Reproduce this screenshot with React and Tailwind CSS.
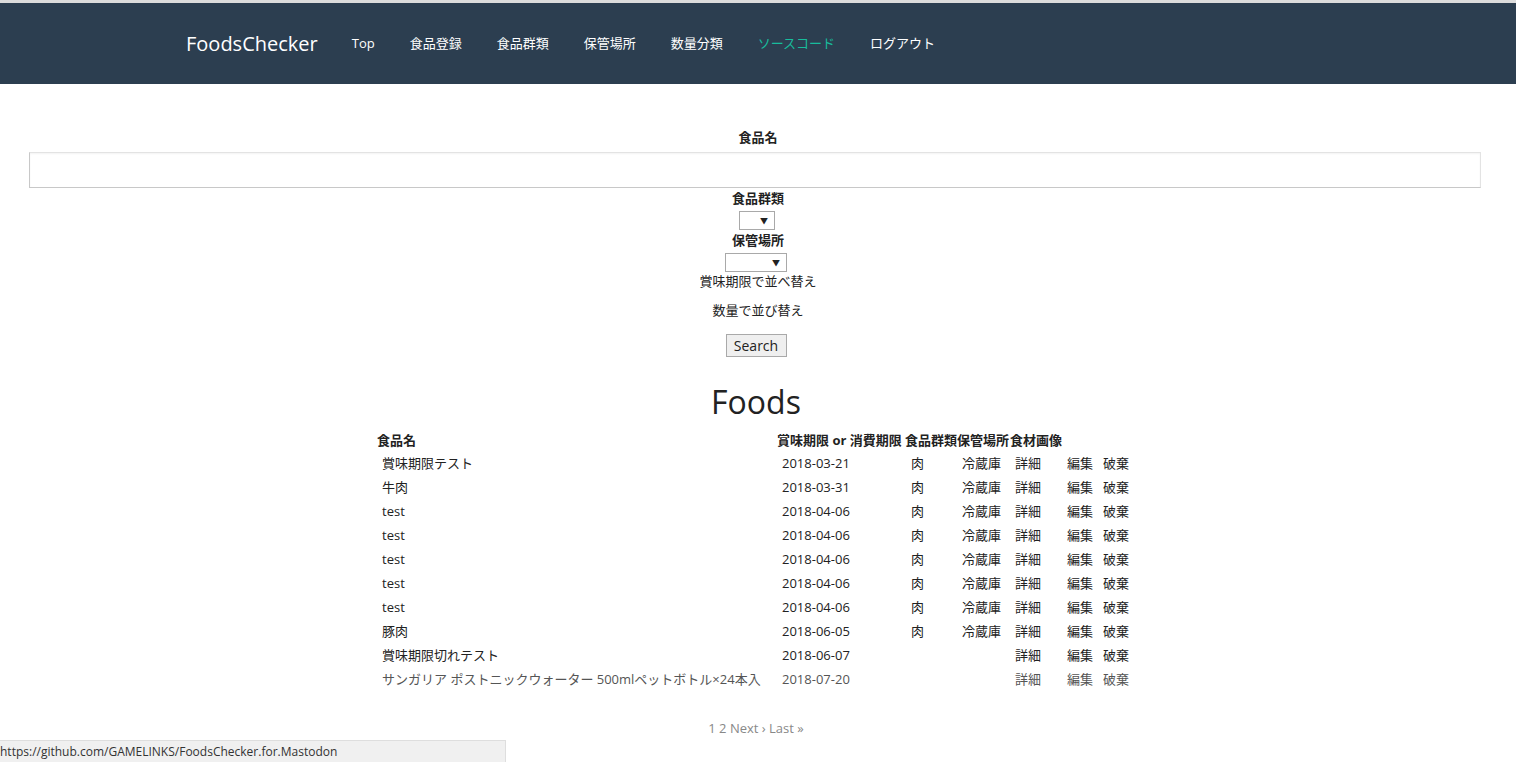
const foods = [
  { name: "賞味期限テスト", date: "2018-03-21", group: "肉", place: "冷蔵庫" },
  { name: "牛肉", date: "2018-03-31", group: "肉", place: "冷蔵庫" },
  { name: "test", date: "2018-04-06", group: "肉", place: "冷蔵庫" },
  { name: "test", date: "2018-04-06", group: "肉", place: "冷蔵庫" },
  { name: "test", date: "2018-04-06", group: "肉", place: "冷蔵庫" },
  { name: "test", date: "2018-04-06", group: "肉", place: "冷蔵庫" },
  { name: "test", date: "2018-04-06", group: "肉", place: "冷蔵庫" },
  { name: "豚肉", date: "2018-06-05", group: "肉", place: "冷蔵庫" },
  { name: "賞味期限切れテスト", date: "2018-06-07", group: "", place: "" },
  {
    name: "サンガリア ポストニックウォーター 500mlペットボトル×24本入",
    date: "2018-07-20",
    group: "",
    place: "",
  },
];

const navLinks = ["Top", "食品登録", "食品群類", "保管場所", "数量分類"];

function FakeSelect({ width }) {
  return (
    <div
      className={`${width} h-[19px] mx-auto border border-[#a9a9a9] bg-white flex items-center justify-end pr-[6px] text-[8px] text-[#222]`}
    >
      ▼
    </div>
  );
}

export default function App() {
  return (
    <div
      className="min-h-[762px] bg-white text-[#222] text-[13px]"
      style={{ fontFamily: '"Open Sans", "Noto Sans CJK JP", sans-serif' }}
    >
      {/* top strip */}
      <div className="h-[3px] bg-[#dcdcdc]" />

      {/* Navbar */}
      <nav className="h-[81px] bg-[#2c3e50]">
        <div className="w-[1170px] mx-auto h-full flex items-center pl-[13px]">
          <span className="text-white text-[20px] mr-[34px]">FoodsChecker</span>
          <div className="flex items-center gap-[35px] text-white text-[13px]">
            {navLinks.map((l) => (
              <span key={l}>{l}</span>
            ))}
            <span className="text-[#18bc9c]">ソースコード</span>
            <span>ログアウト</span>
          </div>
        </div>
      </nav>

      {/* Search form */}
      <div className="pt-[43px] text-center">
        <div className="font-bold leading-[20px]">食品名</div>
        <div className="ml-[29px] w-[1452px] h-[36px] mt-[5px] border border-[#e3e3e3] border-l-[#c8c8c8] border-b-[#c8c8c8] shadow-[inset_0_1px_2px_rgba(0,0,0,0.05)]" />
        <div className="font-bold leading-[20px]">食品群類</div>
        <div className="mt-[3px] flex justify-center">
          <div className="ml-[-2px]">
            <FakeSelect width="w-[36px]" />
          </div>
        </div>
        <div className="font-bold leading-[20px]">保管場所</div>
        <div className="mt-[3px] flex justify-center">
          <div className="ml-[-4px]">
            <FakeSelect width="w-[62px]" />
          </div>
        </div>
        <div className="leading-[18px]">賞味期限で並べ替え</div>
        <div className="leading-[18px] mt-[11px]">数量で並び替え</div>
        <div className="mt-[15px] flex justify-center">
          <button className="ml-[-4px] w-[61px] h-[23px] border border-[#a9a9a9] bg-[#efefef] text-[14px] text-[#222] leading-none">
            Search
          </button>
        </div>
      </div>

      {/* Foods list */}
      <h1 className="text-center text-[32px] font-normal leading-[40px] mt-[25px] text-[#222] pr-[4px]">
        Foods
      </h1>

      <div className="flex justify-center pr-[4px] mt-[8px]">
        <table className="table-fixed border-collapse w-[758px]">
          <colgroup>
            <col className="w-[400px]" />
            <col className="w-[128px]" />
            <col className="w-[52px]" />
            <col className="w-[53px]" />
            <col className="w-[52px]" />
            <col className="w-[36px]" />
            <col className="w-[37px]" />
          </colgroup>
          <thead>
            <tr className="h-[22px] text-left">
              <th className="p-0 font-bold whitespace-nowrap">食品名</th>
              <th className="p-0 font-bold whitespace-nowrap">賞味期限 or 消費期限</th>
              <th className="p-0 font-bold whitespace-nowrap">食品群類</th>
              <th className="p-0 font-bold whitespace-nowrap">保管場所</th>
              <th className="p-0 font-bold whitespace-nowrap">食材画像</th>
              <th className="p-0" />
              <th className="p-0" />
            </tr>
          </thead>
          <tbody>
            {foods.map((f, i) => (
              <tr
                key={i}
                className={`h-[24px] ${i === foods.length - 1 ? "text-[#555]" : ""}`}
              >
                <td className="pl-[5px] whitespace-nowrap">{f.name}</td>
                <td className="pl-[5px] whitespace-nowrap">{f.date}</td>
                <td className="pl-[6px]">{f.group}</td>
                <td className="pl-[5px] whitespace-nowrap">{f.place}</td>
                <td className="pl-[5px]">詳細</td>
                <td className="pl-[5px]">編集</td>
                <td className="pl-[5px]">破棄</td>
              </tr>
            ))}
          </tbody>
        </table>
      </div>

      <div className="text-center text-[#888] mt-[26px] leading-[20px] pr-[4px]">
        1 2 Next › Last »
      </div>

      {/* browser status bar */}
      <div className="fixed left-0 bottom-0 w-[506px] h-[22px] bg-[#f0f0f0] border-t border-r border-[#dedede] flex items-center text-[12px] text-[#333]">
        https://github.com/GAMELINKS/FoodsChecker.for.Mastodon
      </div>
    </div>
  );
}
